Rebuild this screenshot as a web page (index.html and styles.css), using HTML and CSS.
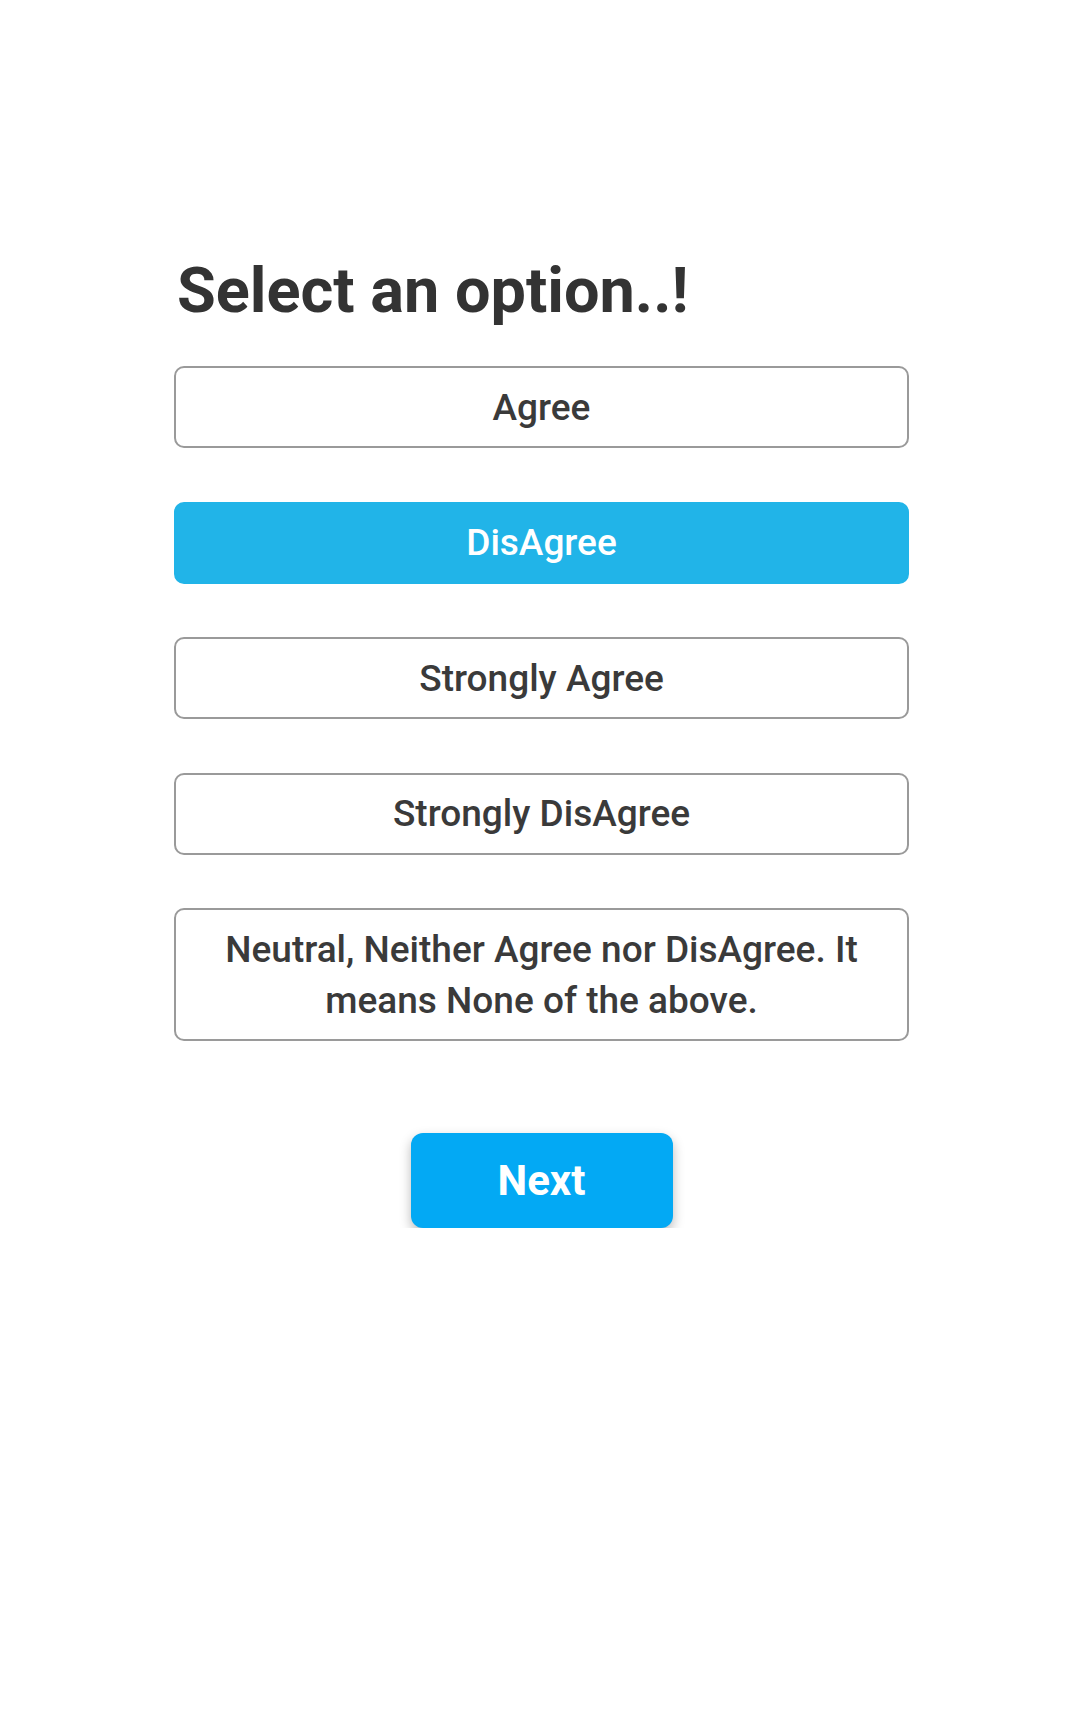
FILE: index.html
```html
<!DOCTYPE html>
<html>
<head>
<meta charset="utf-8">
<link rel="stylesheet" href="styles.css">
</head>
<body>
<main class="page">
  <h1 class="title">Select an option..!</h1>
  <div class="options">
    <button class="option">Agree</button>
    <button class="option selected">DisAgree</button>
    <button class="option">Strongly Agree</button>
    <button class="option">Strongly DisAgree</button>
    <button class="option">Neutral, Neither Agree nor DisAgree. It means None of the above.</button>
  </div>
  <div class="actions">
    <button class="next">Next</button>
  </div>
</main>
</body>
</html>
```
FILE: styles.css
```css
* { box-sizing: border-box; }
html, body {
  margin: 0;
  padding: 0;
  background: #ffffff;
  font-family: Roboto, "Noto Sans", sans-serif;
}
.page {
  width: 735px;
  margin-left: 174px;
  padding-top: 251px;
}
.title {
  margin: 0 0 36px 3px;
  font-size: 63px;
  line-height: 79px;
  font-weight: 700;
  color: #333333;
}
.options {
  display: flex;
  flex-direction: column;
  gap: 53.5px;
}
.option {
  display: block;
  width: 100%;
  margin: 0;
  padding: 13.5px 44px;
  border: 2px solid #9a9a9a;
  border-radius: 10px;
  background: #ffffff;
  font-family: Roboto, "Noto Sans", sans-serif;
  font-size: 37px;
  line-height: 51px;
  font-weight: 500;
  color: #3a3a3a;
  text-align: center;
}
.option.selected {
  background: #21b4e8;
  border-color: #21b4e8;
  color: #ffffff;
}
.actions {
  display: flex;
  justify-content: center;
  padding-top: 92px;
}
.next {
  width: 262px;
  height: 95px;
  border: none;
  border-radius: 12px;
  background: #03a9f4;
  color: #ffffff;
  font-family: Roboto, "Noto Sans", sans-serif;
  font-size: 42px;
  font-weight: 700;
  box-shadow: 0 5px 12px rgba(0, 0, 0, 0.28);
}
```
